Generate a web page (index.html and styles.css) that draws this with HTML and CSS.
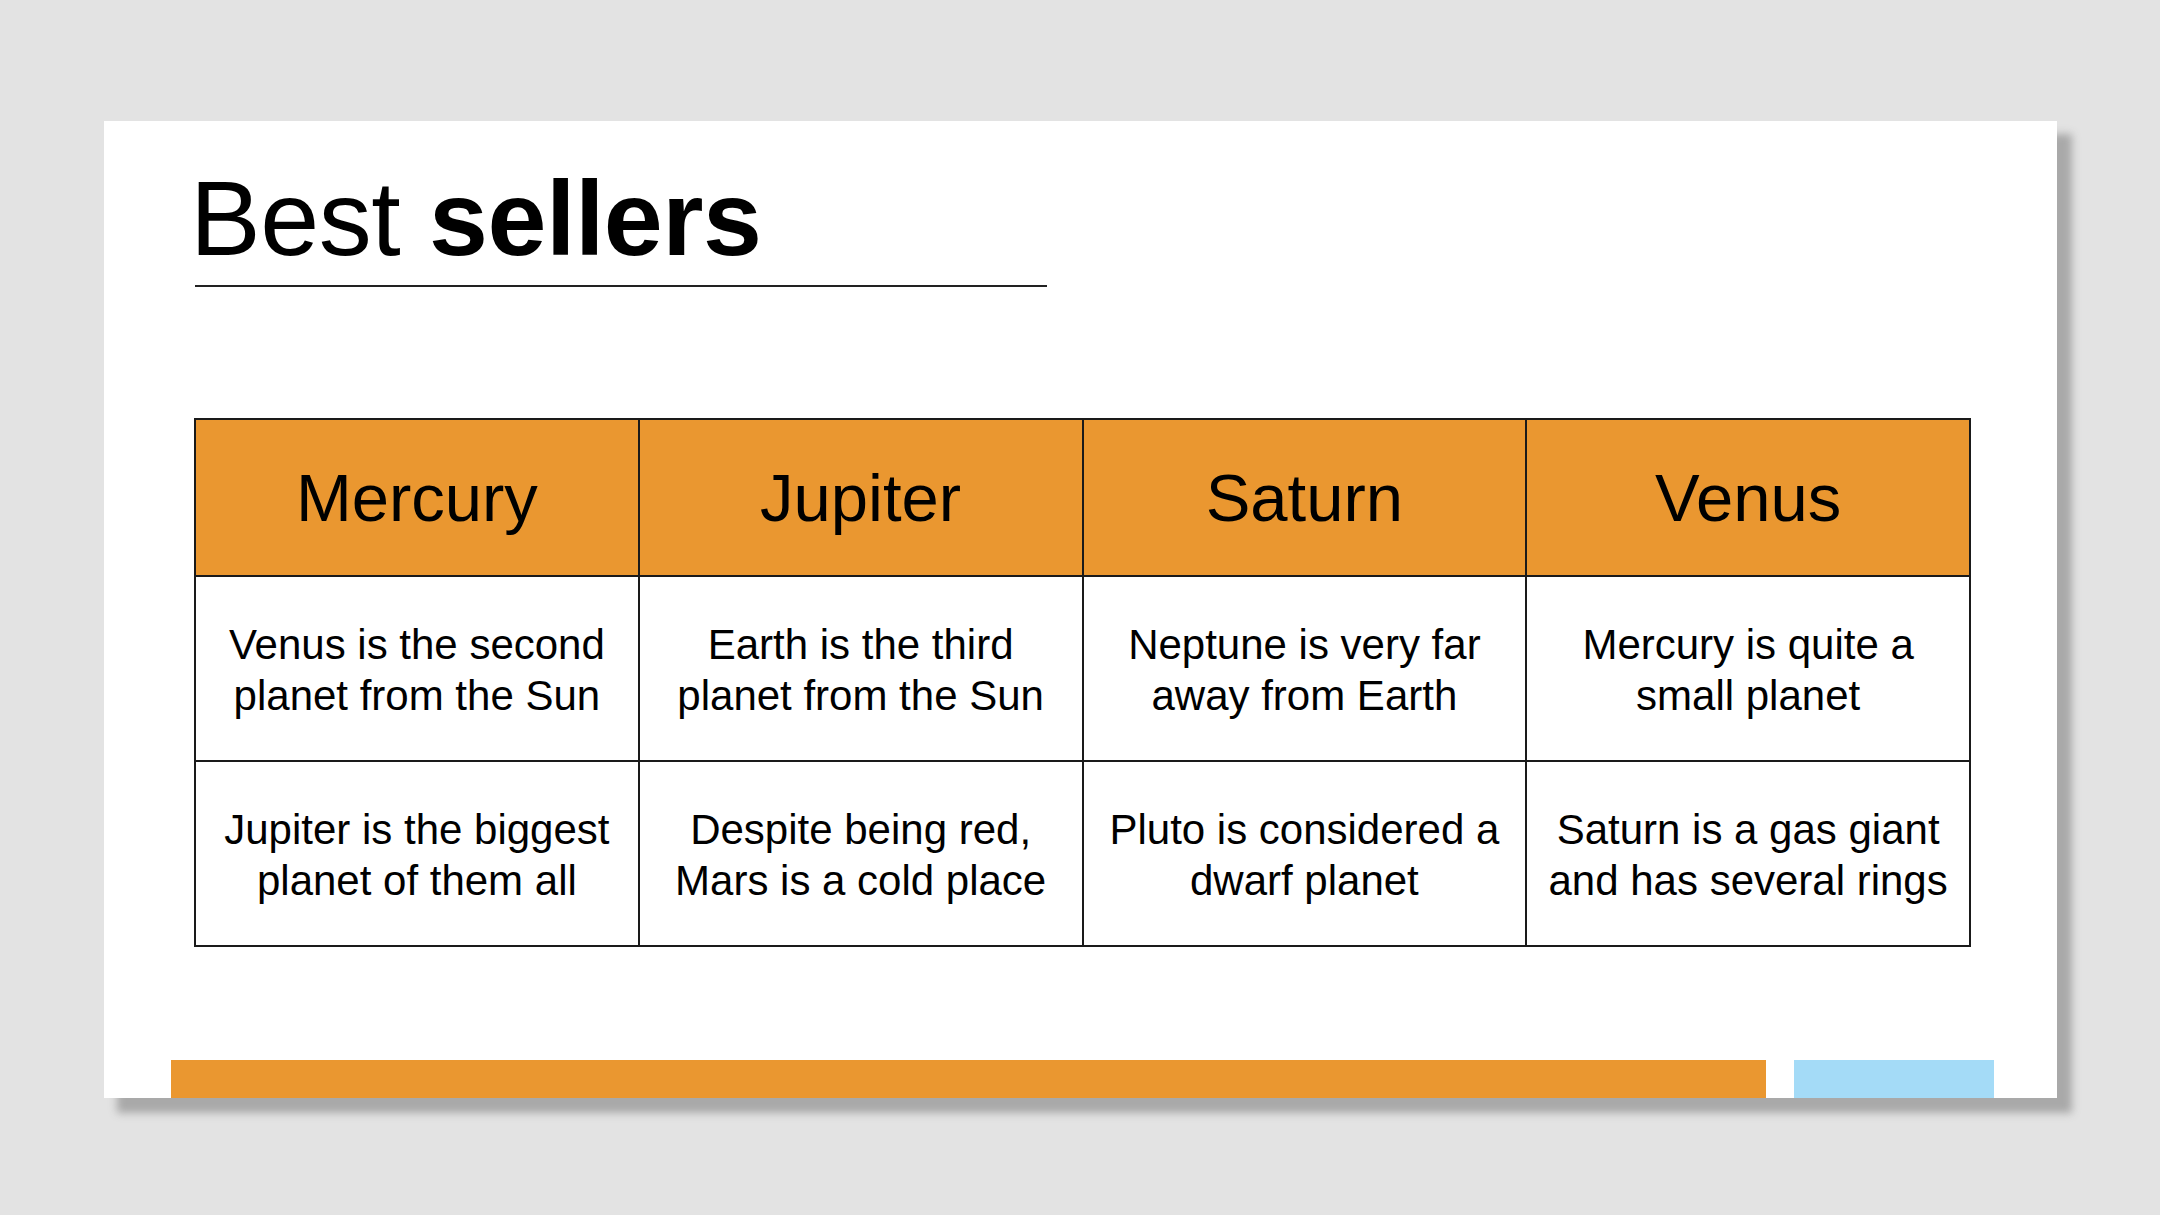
FILE: index.html
```html
<!DOCTYPE html>
<html lang="en">
	<head>
		<meta charset="UTF-8" />
		<meta name="viewport" content="width=device-width, initial-scale=1.0" />
		<title>Best sellers</title>
		<link rel="stylesheet" href="styles.css">
	</head>
	<body>
		<div class="slide">
			<div class="content">
				<h1 class="title">Best <b>sellers</b></h1>
				<div class="title-rule"></div>

				<table class="planets">
					<thead>
						<tr>
							<th>Mercury</th>
							<th>Jupiter</th>
							<th>Saturn</th>
							<th>Venus</th>
						</tr>
					</thead>
					<tbody>
						<tr>
							<td>Venus is the second<br>planet from the Sun</td>
							<td>Earth is the third<br>planet from the Sun</td>
							<td>Neptune is very far<br>away from Earth</td>
							<td>Mercury is quite a<br>small planet</td>
						</tr>
						<tr>
							<td>Jupiter is the biggest<br>planet of them all</td>
							<td>Despite being red,<br>Mars is a cold place</td>
							<td>Pluto is considered a<br>dwarf planet</td>
							<td>Saturn is a gas giant<br>and has several rings</td>
						</tr>
					</tbody>
				</table>
			</div>

			<div class="footer-bars">
				<div class="bar bar-orange"></div>
				<div class="bar bar-blue"></div>
			</div>
		</div>
	</body>
</html>
```

FILE: styles.css
```css
body {
	margin: 0;
	padding: 121px 0 80px 104px;
	background-color: #e3e3e3;
	font-family: "Liberation Sans", Arial, sans-serif;
	color: #000;
}
.slide {
	width: 1953px;
	height: 977px;
	background-color: #fff;
	box-shadow: 14px 14px 8px 1px #a9a9a9;
	display: flex;
	flex-direction: column;
}
.content {
	padding: 44px 0 0 90px;
}
.title {
	margin: 0 0 0 -4px;
	font-size: 106px;
	line-height: 106px;
	font-weight: normal;
	letter-spacing: -0.5px;
}
.title b {
	font-weight: bold;
}
.title-rule {
	width: 852px;
	height: 2px;
	margin: 14px 0 0 1px;
	background-color: #222;
}
.planets {
	margin-top: 131px;
	width: 1777px;
	table-layout: fixed;
	border-collapse: collapse;
	border: 2px solid #1a1a1a;
}
.planets th,
.planets td {
	border: 2px solid #1a1a1a;
	text-align: center;
	vertical-align: middle;
	padding: 0 10px;
}
.planets th {
	height: 155px;
	background-color: #ea9730;
	font-size: 67px;
	font-weight: normal;
}
.planets td {
	height: 181px;
	font-size: 42px;
	line-height: 51px;
	padding-top: 2px;
}
.footer-bars {
	margin-top: auto;
	display: flex;
	gap: 28px;
	padding-left: 67px;
}
.bar {
	height: 38px;
}
.bar-orange {
	width: 1595px;
	background-color: #ea9730;
}
.bar-blue {
	width: 200px;
	background-color: #a4dbf7;
}
```
